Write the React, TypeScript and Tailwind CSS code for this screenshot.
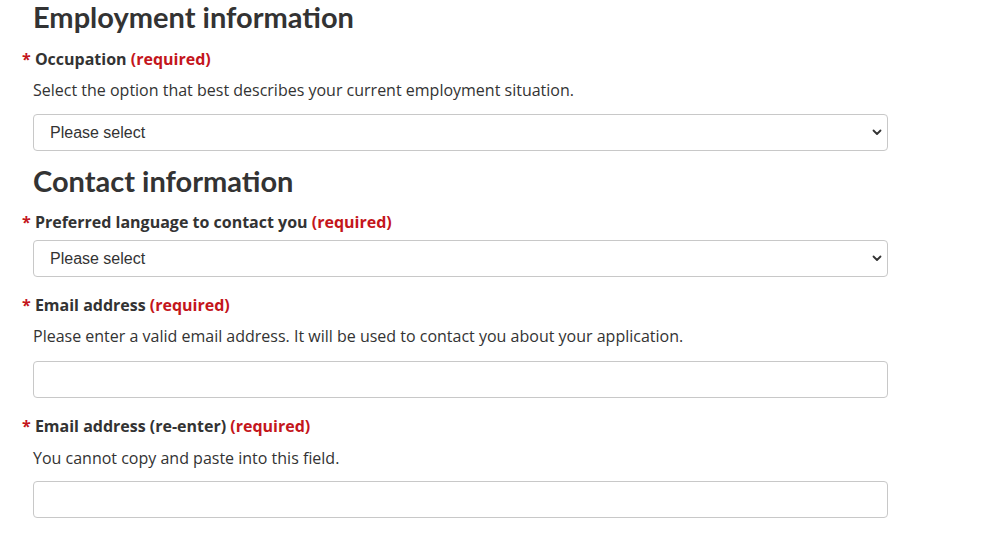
import React from 'react';

function Label({ text }: { text: string }) {
  return (
    <div className="-ml-[11px] text-[16px] font-bold leading-6 text-[#333]">
      <span className="text-[#c4161c]">*</span> {text}{' '}
      <span className="text-[#c4161c]">(required)</span>
    </div>
  );
}

function Hint({ text, className }: { text: string; className?: string }) {
  return <p className={'text-[16px] leading-6 text-[#333] ' + (className ?? '')}>{text}</p>;
}

function Select({ className }: { className?: string }) {
  return (
    <div className={'relative w-[855px] ' + (className ?? '')}>
      <select
        defaultValue=""
        className="h-[37px] w-full appearance-none rounded-[4px] border border-[#c8c8c8] bg-white pl-4 text-[16px] text-[#333] outline-none"
        style={{ fontFamily: '"Liberation Sans", Arial, sans-serif' }}
      >
        <option value="">Please select</option>
      </select>
      <svg
        className="pointer-events-none absolute right-[6px] top-[15px]"
        width="10"
        height="7"
        viewBox="0 0 10 7"
      >
        <path d="M1.5 1.5 L5 5 L8.5 1.5" fill="none" stroke="#333" strokeWidth="1.8" strokeLinecap="round" strokeLinejoin="round" />
      </svg>
    </div>
  );
}

function TextInput({ className }: { className?: string }) {
  return (
    <input
      type="email"
      className={'block h-[37px] w-[855px] rounded-[4px] border border-[#c8c8c8] bg-white px-3 outline-none ' + (className ?? '')}
    />
  );
}

export default function App() {
  return (
    <div
      className="min-h-[536px] w-[998px] bg-white pl-[33px]"
      style={{ fontFamily: '"Open Sans", "Noto Sans", sans-serif' }}
    >
      <h2 className="text-[29px] font-bold leading-[34px] text-[#333]" style={{ fontFamily: 'Lato, sans-serif' }}>
        Employment information
      </h2>

      <div className="mt-[13px]">
        <Label text="Occupation" />
      </div>
      <Hint text="Select the option that best describes your current employment situation." className="mt-[7px]" />
      <Select className="mt-[12px]" />

      <h2 className="mt-[13px] text-[29px] font-bold leading-[34px] text-[#333]" style={{ fontFamily: 'Lato, sans-serif' }}>
        Contact information
      </h2>

      <div className="mt-[12px]">
        <Label text="Preferred language to contact you" />
      </div>
      <Select className="mt-[6px]" />

      <div className="mt-[16px]">
        <Label text="Email address" />
      </div>
      <Hint text="Please enter a valid email address. It will be used to contact you about your application." className="mt-[7px]" />
      <TextInput className="mt-[13px]" />

      <div className="mt-[16px]">
        <Label text="Email address (re-enter)" />
      </div>
      <Hint text="You cannot copy and paste into this field." className="mt-[8px]" />
      <TextInput className="mt-[11px]" />
    </div>
  );
}
